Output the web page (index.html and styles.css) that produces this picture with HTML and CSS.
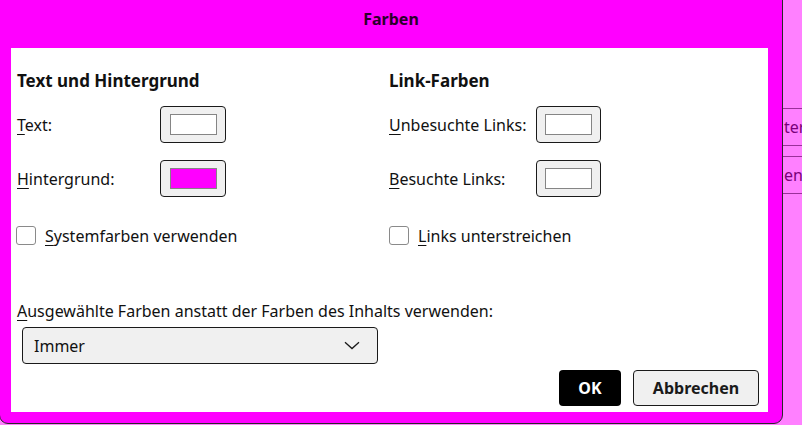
FILE: index.html
```html
<!DOCTYPE html>
<html lang="de">
<head>
<meta charset="utf-8">
<title>Farben</title>
<link rel="stylesheet" href="styles.css">
</head>
<body>
<div class="page">
  <div class="bg-list">
    <div class="bg-item">ter</div>
    <div class="bg-item">en</div>
  </div>
</div>
<div class="dialog">
  <div class="titlebar">Farben</div>
  <div class="content">
    <div class="columns">
      <section class="col col-left">
        <h2 class="heading">Text und Hintergrund</h2>
        <div class="row">
          <span class="label"><u>T</u>ext:</span>
          <span class="swatch-btn"><span class="swatch sw-white"></span></span>
        </div>
        <div class="row">
          <span class="label"><u>H</u>intergrund:</span>
          <span class="swatch-btn"><span class="swatch sw-magenta"></span></span>
        </div>
        <div class="check">
          <span class="box"></span>
          <span class="check-text"><u>S</u>ystemfarben verwenden</span>
        </div>
      </section>
      <section class="col col-right">
        <h2 class="heading">Link-Farben</h2>
        <div class="row">
          <span class="label"><u>U</u>nbesuchte Links:</span>
          <span class="swatch-btn"><span class="swatch sw-white"></span></span>
        </div>
        <div class="row">
          <span class="label"><u>B</u>esuchte Links:</span>
          <span class="swatch-btn"><span class="swatch sw-white"></span></span>
        </div>
        <div class="check">
          <span class="box"></span>
          <span class="check-text"><u>L</u>inks unterstreichen</span>
        </div>
      </section>
    </div>
    <div class="select-label"><u>A</u>usgewählte Farben anstatt der Farben des Inhalts verwenden:</div>
    <div class="select">
      <span class="select-value">Immer</span>
      <svg class="chevron" width="16" height="9" viewBox="0 0 16 9"><path d="M1 1.2 L8 7.6 L15 1.2" fill="none" stroke="#1a1a1a" stroke-width="1.3"/></svg>
    </div>
    <div class="buttons">
      <span class="btn btn-ok">OK</span>
      <span class="btn btn-cancel">Abbrechen</span>
    </div>
  </div>
</div>
</body>
</html>
```

FILE: styles.css
```css
* { box-sizing: border-box; }
html, body { margin: 0; padding: 0; }
body {
  width: 802px;
  height: 425px;
  overflow: hidden;
  background: #ff80ff;
  font-family: "Noto Sans", "Open Sans", sans-serif;
  color: #111;
  position: relative;
}
.page {
  padding-top: 108px;
  padding-left: 782px;
}
.bg-item {
  height: 38px;
  border-top: 1px solid #9a309a;
  border-bottom: 1px solid #9a309a;
  color: #7a007a;
  font-size: 16px;
  line-height: 36px;
  padding-left: 2px;
  margin-bottom: 10px;
  white-space: nowrap;
  overflow: hidden;
}
.dialog {
  position: absolute;
  left: -1px;
  top: -1px;
  width: 784px;
  height: 425px;
  background: #ff00ff;
  border: 1px solid #2a2a2a;
  border-radius: 0 0 9px 9px;
  padding: 0 14px 11px 11px;
  display: flex;
  flex-direction: column;
}
.titlebar {
  height: 48px;
  flex: none;
  display: flex;
  align-items: center;
  justify-content: center;
  font-weight: 700;
  font-size: 16px;
  color: #2a002a;
  padding-bottom: 11px;
  padding-left: 3px;
}
.content {
  flex: 1;
  background: #fff;
  padding: 0 9px 0 6px;
  display: flex;
  flex-direction: column;
}
.columns {
  display: grid;
  grid-template-columns: 372px 1fr;
}
.heading {
  margin: 21px 0 13px;
  font-size: 17px;
  line-height: 24px;
  font-weight: 700;
}
.row {
  display: grid;
  align-items: center;
  height: 37px;
  margin-bottom: 17px;
}
.col-left .row { grid-template-columns: 143px auto; }
.col-right .row { grid-template-columns: 147px auto; }
.label, .check-text, .select-label, .select-value {
  font-size: 16px;
}
.swatch-btn {
  width: 66px;
  height: 37px;
  background: #f0f0f0;
  border: 1px solid #1a1a1a;
  border-radius: 4px;
  display: flex;
  align-items: center;
  justify-content: center;
}
.col-right .swatch-btn { width: 65px; }
.swatch {
  width: 47px;
  height: 21px;
  border: 1px solid #858585;
}
.sw-white { background: #fff; }
.sw-magenta { background: #ff00ff; }
.check {
  display: flex;
  align-items: center;
  gap: 9px;
  height: 19px;
  margin-top: 29px;
}
.col-left .check { margin-left: -1px; }
.box {
  width: 20px;
  height: 19px;
  border: 1px solid #8a8a8a;
  border-radius: 3px;
  background: #fff;
}
.select-label {
  margin-top: 54px;
  line-height: 24px;
}
.select {
  margin-top: 4px;
  margin-left: 5px;
  width: 356px;
  height: 37px;
  background: #f0f0f0;
  border: 1px solid #1a1a1a;
  border-radius: 4px;
  display: flex;
  align-items: center;
  justify-content: space-between;
  padding: 0 17px 0 11px;
}
.buttons {
  margin-top: 6px;
  display: flex;
  justify-content: flex-end;
  gap: 12px;
}
.btn {
  height: 36px;
  display: flex;
  align-items: center;
  justify-content: center;
  font-size: 16px;
  font-weight: 700;
  border-radius: 4px;
}
.btn-ok {
  width: 62px;
  background: #000;
  color: #fff;
}
.btn-cancel {
  width: 126px;
  background: #f0f0f0;
  border: 1px solid #1a1a1a;
  color: #1a1a1a;
}
u { text-underline-offset: 3px; text-decoration-thickness: 1px; }
```
